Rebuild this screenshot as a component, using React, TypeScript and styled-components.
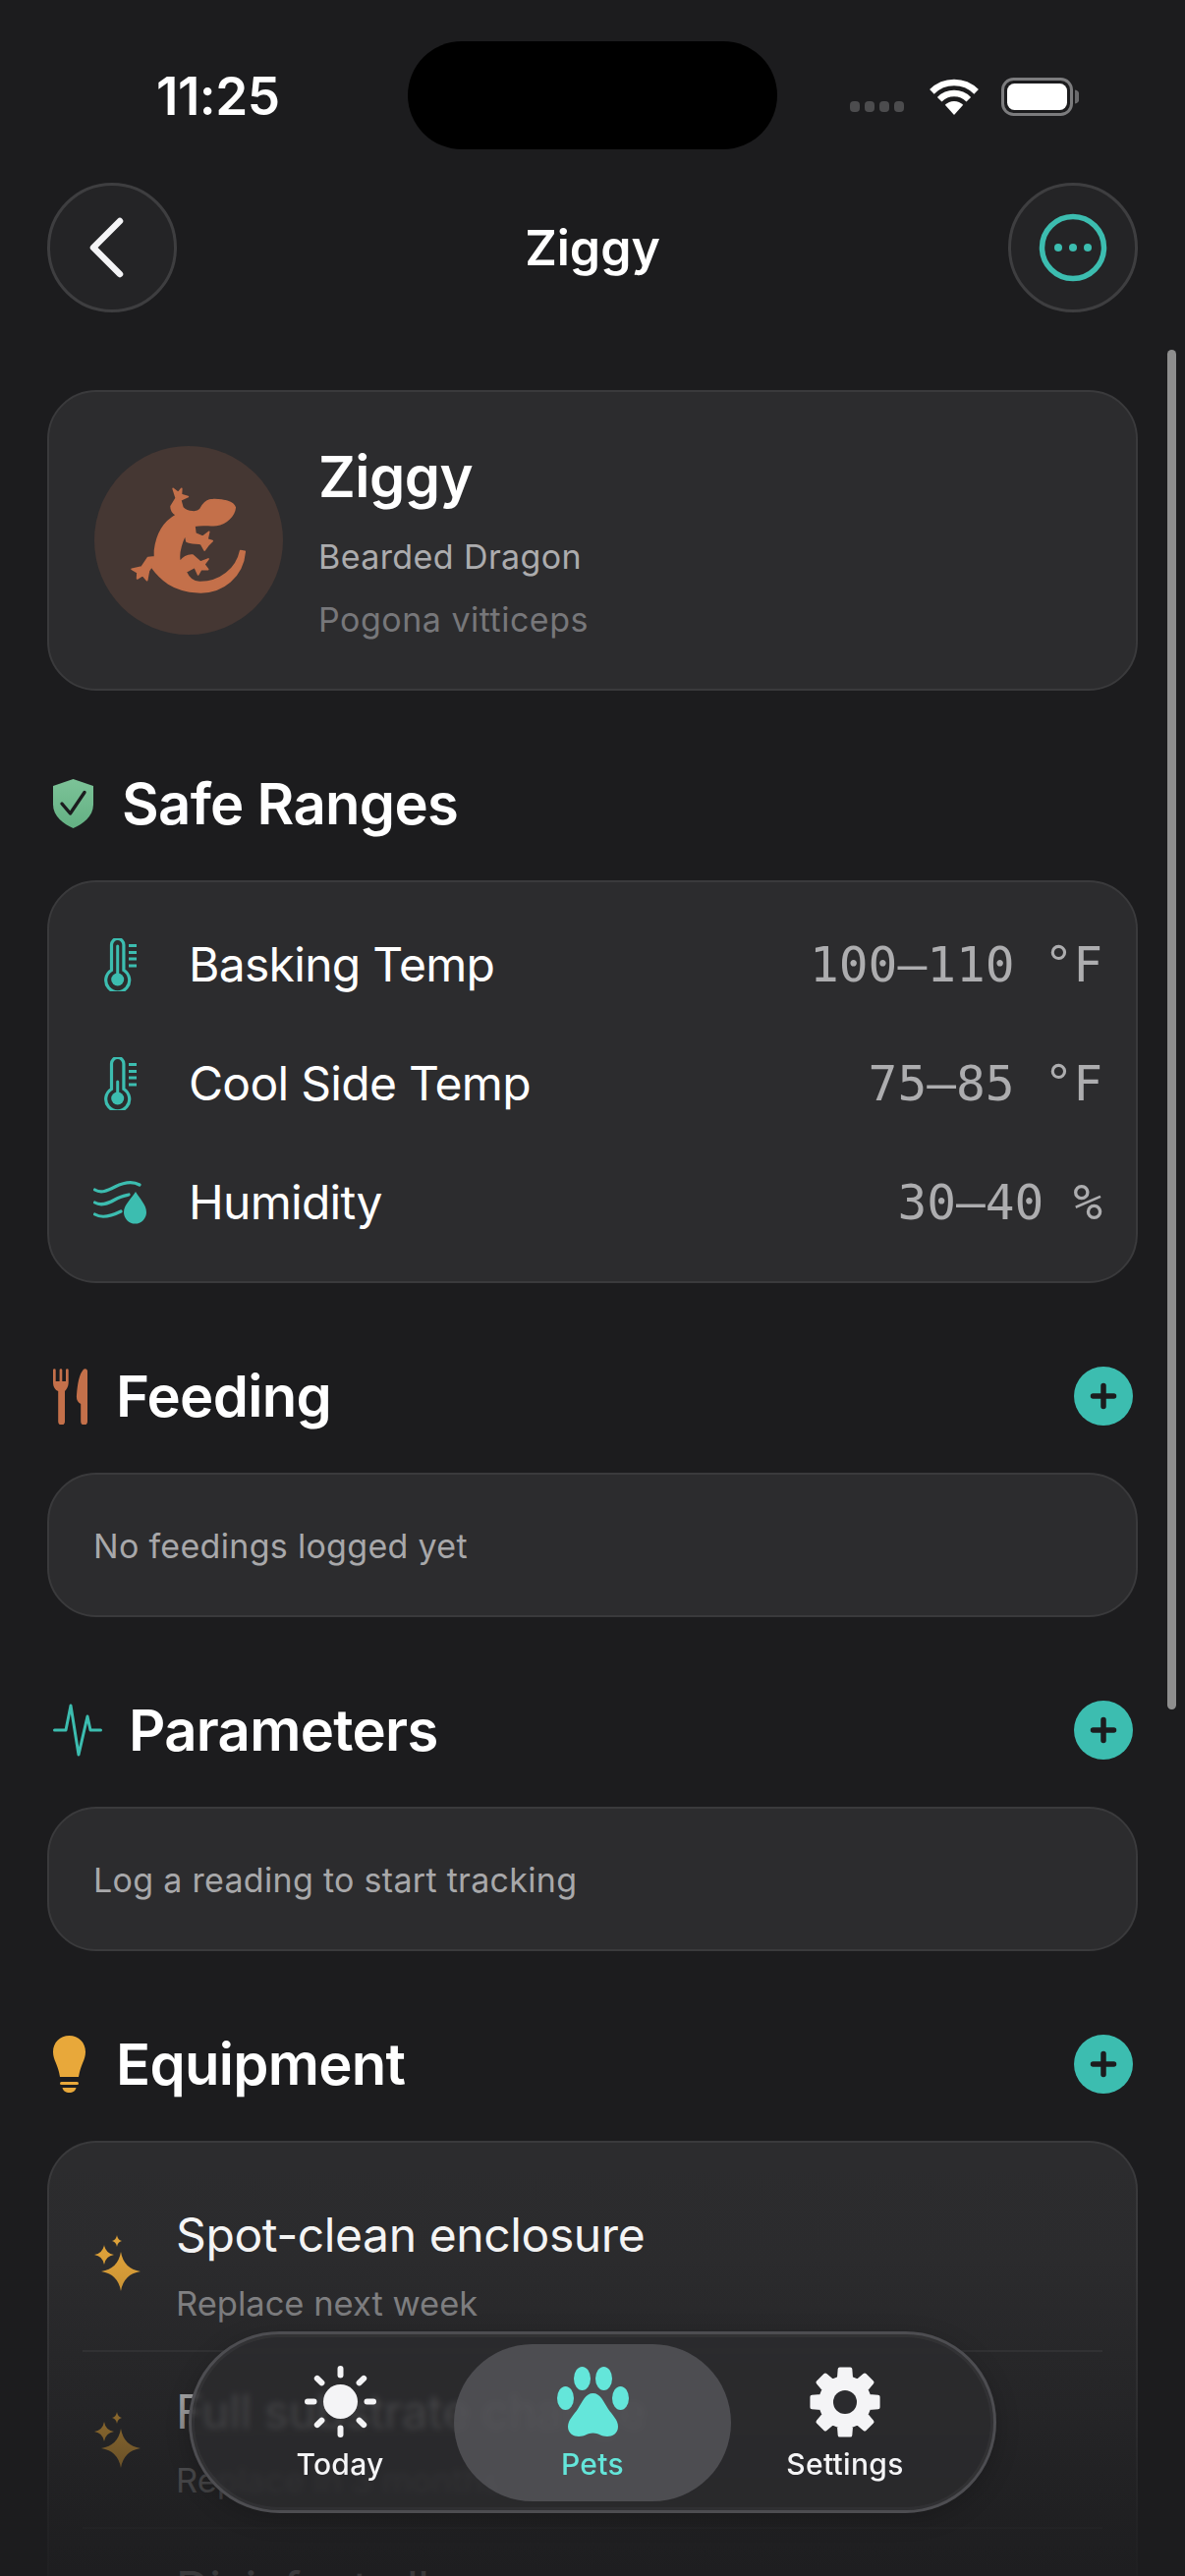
import React from 'react'
import styled, { createGlobalStyle } from 'styled-components'

const TEAL = '#3cbdb0'
const RUST = '#c4704a'
const AMBER = '#e8a83a'

const GlobalStyle = createGlobalStyle`
  html, body {
    margin: 0;
    padding: 0;
    background: #1c1c1e;
  }
  * {
    box-sizing: border-box;
  }
`

const Page = styled.div`
  position: relative;
  width: 1206px;
  height: 2622px;
  overflow: hidden;
  background: #1c1c1e;
  color: #fff;
  font-family: Inter, 'Noto Sans', sans-serif;
`

const StatusBar = styled.div`
  display: grid;
  grid-template-columns: 415px 376px 1fr;
  align-items: center;
  height: 186px;
  padding-top: 42px;
  padding-bottom: 34px;
`

const Clock = styled.div`
  padding-left: 159px;
  padding-top: 2px;
  font-size: 53px;
  font-weight: 600;
  letter-spacing: -0.5px;
  line-height: 60px;
`

const Island = styled.div`
  height: 110px;
  border-radius: 55px;
  background: #000;
`

const StatusIcons = styled.div`
  display: flex;
  align-items: center;
  padding-top: 2px;
  padding-left: 74px;
  gap: 23px;
`

const SignalDots = styled.div`
  display: flex;
  gap: 5px;
  margin-top: 20px;
  margin-right: 3px;
`

const SignalDot = styled.span`
  width: 10px;
  height: 11px;
  border-radius: 4px;
  background: #4c4c4e;
`

const Header = styled.header`
  display: grid;
  grid-template-columns: 132px 1fr 132px;
  align-items: center;
  padding: 0 48px;
`

const RoundButton = styled.button`
  display: flex;
  align-items: center;
  justify-content: center;
  width: 132px;
  height: 132px;
  padding: 0;
  border: 3px solid #3e3e40;
  border-radius: 50%;
  background: #242426;
`

const HeaderTitle = styled.h1`
  margin: 0;
  text-align: center;
  font-size: 50px;
  font-weight: 600;
  line-height: 64px;
`

const Content = styled.main`
  padding: 79px 48px 0;
`

const Card = styled.section`
  border: 2px solid #3a3a3c;
  border-radius: 50px;
  background: #2c2c2e;
`

const ProfileCard = styled(Card)`
  display: flex;
  align-items: center;
  gap: 36px;
  height: 306px;
  padding-left: 46px;
`

const Avatar = styled.div`
  display: flex;
  align-items: center;
  justify-content: center;
  width: 192px;
  height: 192px;
  border-radius: 50%;
  background: #453733;
`

const ProfileText = styled.div`
  display: flex;
  flex-direction: column;
  margin-top: 6px;
`

const PetName = styled.div`
  font-size: 58px;
  font-weight: 600;
  line-height: 70px;
  letter-spacing: -0.5px;
  margin-top: -3px;
`

const Breed = styled.div`
  margin-top: 25px;
  font-size: 34px;
  line-height: 44px;
  letter-spacing: 0.4px;
  color: #acacae;
`

const Species = styled.div`
  margin-top: 20px;
  font-size: 34px;
  line-height: 44px;
  letter-spacing: 0.5px;
  color: #77777a;
`

const SectionHead = styled.div<{ $gap?: number }>`
  display: flex;
  align-items: center;
  gap: ${p => p.$gap ?? 29}px;
  height: 66px;
  margin: 82px 5px 45px 6px;
`

const SectionTitle = styled.h2`
  flex: 1;
  margin: 0;
  font-size: 58px;
  font-weight: 600;
  line-height: 66px;
  letter-spacing: -0.7px;
`

const AddButton = styled.button`
  display: flex;
  align-items: center;
  justify-content: center;
  width: 60px;
  height: 60px;
  padding: 0;
  border: 0;
  border-radius: 50%;
  background: ${TEAL};
`

const RangeCard = styled(Card)`
  padding: 23px 34px 20px;
`

const RangeRow = styled.div`
  display: flex;
  align-items: center;
  height: 121px;
`

const RangeIcon = styled.div`
  display: flex;
  justify-content: center;
  width: 76px;
  margin-right: 32px;
`

const RangeLabel = styled.div`
  flex: 1;
  font-size: 48px;
  line-height: 58px;
  letter-spacing: -0.7px;
  color: #fff;
`

const RangeValue = styled.div`
  font-family: 'DejaVu Sans Mono', 'Liberation Mono', monospace;
  font-size: 49.5px;
  line-height: 58px;
  color: #adadaf;
  white-space: pre;
`

const EmptyCard = styled(Card)`
  display: flex;
  align-items: center;
  height: 147px;
  padding-left: 45px;
  padding-top: 2px;
  font-size: 34px;
  letter-spacing: 0.3px;
  color: #a8a8aa;
`

const ListCard = styled(Card)`
  padding: 33px 34px 0;
  border-bottom: 0;
`

const ListRow = styled.div`
  display: flex;
  align-items: center;
  gap: 35px;
  height: 180px;
  padding-left: 12px;
  border-bottom: 2px solid #3a3a3c;
`

const ListText = styled.div`
  display: flex;
  flex-direction: column;
  margin-top: 6px;
`

const ListTitle = styled.div`
  font-size: 48px;
  line-height: 58px;
  letter-spacing: -0.4px;
  color: #fff;
`

const ListSub = styled.div`
  margin-top: 19px;
  font-size: 34.5px;
  line-height: 44px;
  color: #939395;
`

const BottomFade = styled.div`
  position: absolute;
  left: 0;
  right: 0;
  top: 2190px;
  bottom: 0;
  background: linear-gradient(
    to bottom,
    rgba(28, 28, 30, 0) 0%,
    rgba(28, 28, 30, 0.06) 25%,
    rgba(28, 28, 30, 0.5) 65%,
    rgba(28, 28, 30, 0.75) 85%,
    rgba(28, 28, 30, 0.88) 100%
  );
`

const ScrollThumb = styled.div`
  position: absolute;
  left: 1188px;
  top: 356px;
  width: 9px;
  height: 1384px;
  border-radius: 5px;
  background: #8e8e8e;
`

const TabBar = styled.nav`
  position: absolute;
  left: 192px;
  top: 2373px;
  display: flex;
  justify-content: center;
  width: 822px;
  height: 185px;
  padding-top: 10px;
  border: 3px solid #4d4d51;
  border-radius: 93px;
  background: rgba(43, 43, 46, 0.78);
  backdrop-filter: blur(3px);
  box-shadow: inset 0 0 0 3px rgba(255, 255, 255, 0.04), 0 6px 24px rgba(0, 0, 0, 0.2);
`

const TabItem = styled.div<{ $active?: boolean }>`
  display: flex;
  flex-direction: column;
  align-items: center;
  width: ${p => (p.$active ? '282px' : '232px')};
  height: 160px;
  padding-top: 21px;
  border-radius: 80px;
  background: ${p => (p.$active ? 'rgba(86, 86, 90, 0.82)' : 'transparent')};
  color: ${p => (p.$active ? '#64e6da' : '#f4f4f6')};
`

const TabIcon = styled.div`
  display: flex;
  align-items: center;
  justify-content: center;
  height: 75px;
`

const TabLabel = styled.div`
  margin-top: 8px;
  font-size: 30px;
  font-weight: 500;
  line-height: 36px;
  letter-spacing: 0.3px;
`

const Wifi = () => (
  <svg width="50" height="37" viewBox="0 0 50 37" fill="none" stroke="#fff" strokeWidth="6.5">
    <path d="M2.4 13.4A32 32 0 0 1 47.6 13.4" />
    <path d="M10.2 21.2A21 21 0 0 1 39.8 21.2" />
    <path d="M25 37L15.8 26.8A13 13 0 0 1 34.2 26.8Z" fill="#fff" stroke="none" />
  </svg>
)

const Battery = () => (
  <svg width="79" height="39" viewBox="0 0 79 39">
    <rect x="1.5" y="1.5" width="70" height="36" rx="11" fill="none" stroke="#7c7c7e" strokeWidth="3" />
    <rect x="6" y="6" width="61" height="27" rx="7.5" fill="#fff" />
    <path d="M75 12.5a5 7 0 0 1 0 14z" fill="#6a6a6c" />
  </svg>
)

const BackIcon = () => (
  <svg width="40" height="62" viewBox="0 0 40 62" fill="none" stroke="#f4f4f6" strokeWidth="6.5" strokeLinecap="round" strokeLinejoin="round" style={{ marginLeft: -10 }}>
    <path d="M33 4L6 31L33 58" />
  </svg>
)

const MoreIcon = () => (
  <svg width="70" height="70" viewBox="0 0 70 70">
    <circle cx="35" cy="35" r="31.5" fill="none" stroke={TEAL} strokeWidth="5.5" />
    <circle cx="20" cy="35" r="4" fill={TEAL} />
    <circle cx="35" cy="35" r="4" fill={TEAL} />
    <circle cx="50" cy="35" r="4" fill={TEAL} />
  </svg>
)

const Gecko = () => (
  <svg width="124" height="114" viewBox="188 200 360 330">
    <path
      fill={RUST}
      stroke={RUST}
      strokeWidth="5"
      strokeLinejoin="round"
      d="M505 268C500 252 470 244 440 245C422 245 410 257 402 274C394 284 366 284 350 268L344 246L366 236L346 230L347 212L337 224L322 212L331 240L316 265C316 278 322 285 332 290C295 310 274 345 268 395L268 414L248 416L229 444L200 450L217 460L216 478L232 468L245 483L250 455L258 443C285 480 320 514 395 518C470 522 528 470 534 398L521 396C510 450 460 490 400 489C385 488 368 478 360 458L386 444L396 466L405 450L425 451L414 436L426 420L403 429L380 409C365 407 350 417 342 429C336 405 345 375 358 347L362 368C375 375 395 372 405 376L415 394L425 380L438 367L423 362L428 340L410 354L388 345L385 322C410 316 430 322 450 320C480 316 503 290 505 268Z"
    />
  </svg>
)

const ShieldIcon = () => (
  <svg width="41" height="50" viewBox="0 0 41 50">
    <defs>
      <linearGradient id="shieldFill" x1="0" y1="0" x2="0" y2="1">
        <stop offset="0" stopColor="#7cc398" />
        <stop offset="1" stopColor="#63b083" />
      </linearGradient>
    </defs>
    <path d="M20.5 0L41 7V26C41 38 30 46 20.5 50C11 46 0 38 0 26V7Z" fill="url(#shieldFill)" />
    <path d="M9 25L17.5 35L32 13.5" fill="none" stroke="#1c1c1e" strokeWidth="3.4" strokeLinecap="round" strokeLinejoin="round" />
  </svg>
)

const Thermometer = ({ stemTop }: { stemTop: number }) => (
  <svg width="33" height="54" viewBox="0 0 33 54">
    <path d="M7.5 32.5V6.7a6.2 6.2 0 0 1 12.4 0V32.5a12 12 0 1 1 -12.4 0Z" fill="none" stroke={TEAL} strokeWidth="3.2" />
    <circle cx="13.7" cy="42" r="6.5" fill={TEAL} />
    <path d={`M13.7 ${stemTop}V40`} stroke={TEAL} strokeWidth="3" strokeLinecap="round" />
    <path d="M25 7.5H33M25 14.5H33M25 21H33M25 28H33" stroke={TEAL} strokeWidth="2.8" />
  </svg>
)

const HumidityIcon = () => (
  <svg width="54" height="44" viewBox="0 0 54 44" fill="none" stroke={TEAL} strokeWidth="3.2" strokeLinecap="round">
    <path d="M1.5 9C8 13 14 10 22 6C30 2 40 0 47 4" />
    <path d="M1.5 22C8 26 15 23 22 19C27 16 32 15 36 14" />
    <path d="M1.5 34C8 38 16 37 28 31" />
    <path d="M43 11C47 18 54 24 54 32a11.5 11.5 0 0 1 -23 0C31 24 39 18 43 11Z" fill={TEAL} stroke="none" />
  </svg>
)

const ForkKnifeIcon = () => (
  <svg width="35" height="57" viewBox="0 0 35 57" fill={RUST}>
    <path d="M0 1.5a1.3 1.3 0 0 1 2.7 0V13H6.6V1.5a1.3 1.3 0 0 1 2.7 0V13H13V1.5a1.3 1.3 0 0 1 2.7 0V14C15.7 19 13 22 12 23V54a3.4 3.4 0 0 1 -6.8 0V23C2.5 22 0 19 0 14Z" />
    <path d="M31 .8C33 -.6 35 .5 35 2.5V54a3.4 3.4 0 0 1 -6.8 0V36C25 34 23.5 32 24 27C25 15 26.5 6 31 .8Z" />
  </svg>
)

const PulseIcon = () => (
  <svg width="50" height="54" viewBox="0 0 50 54" fill="none" stroke={TEAL} strokeWidth="3" strokeLinecap="round" strokeLinejoin="round">
    <path d="M1.5 27H13L18 2L26 52L35 13L38 27H48.5" />
  </svg>
)

const BulbIcon = () => (
  <svg width="33" height="58" viewBox="0 0 33 58" fill={AMBER}>
    <path d="M16.5 0C26 0 33 7 33 16.5C33 25 28 29 26 42H7C5 29 0 25 0 16.5C0 7 7 0 16.5 0Z" />
    <rect x="7" y="47" width="19" height="3" rx="1.5" />
    <path d="M9.5 53H23.5C23 56 20 58 16.5 58C13 58 10 56 9.5 53Z" />
  </svg>
)

const star = (cx: number, cy: number, rx: number, ry: number) => {
  const kx = rx * 0.14
  const ky = ry * 0.14
  return `M${cx} ${cy - ry}Q${cx + kx} ${cy - ky} ${cx + rx} ${cy}Q${cx + kx} ${cy + ky} ${cx} ${cy + ry}Q${cx - kx} ${cy + ky} ${cx - rx} ${cy}Q${cx - kx} ${cy - ky} ${cx} ${cy - ry}Z`
}

const SparkleIcon = () => (
  <svg width="48" height="57" viewBox="0 0 48 57" fill={AMBER}>
    <path d={star(23, 6, 5, 6)} />
    <path d={star(10, 20, 10, 10)} />
    <path d={star(27, 37, 20, 20)} />
  </svg>
)

const PlusIcon = () => (
  <svg width="30" height="30" viewBox="0 0 30 30" fill="none" stroke="#1c1c1e" strokeWidth="5.5" strokeLinecap="round">
    <path d="M15 4.5V25.5M4.5 15H25.5" />
  </svg>
)

const SunIcon = () => {
  const rays = [0, 45, 90, 135, 180, 225, 270, 315]
  return (
    <svg width="75" height="75" viewBox="0 0 75 75" fill="currentColor">
      <circle cx="37.5" cy="37.5" r="17.5" />
      {rays.map(a => (
        <rect key={a} x="34.5" y="1" width="6" height="12.5" rx="3" transform={`rotate(${a} 37.5 37.5)`} />
      ))}
    </svg>
  )
}

const PawIcon = () => (
  <svg width="73" height="71" viewBox="0 0 73 71" fill="currentColor">
    <ellipse cx="8.5" cy="32" rx="8.5" ry="12" />
    <ellipse cx="25.5" cy="12" rx="8.5" ry="12" />
    <ellipse cx="47.5" cy="12" rx="8.5" ry="12" />
    <ellipse cx="64.5" cy="32" rx="8.5" ry="12" />
    <path d="M36.5 27C44 27 47 35 52 43C56 49 62 54 62 61C62 68 56 71 51 71C45 71 42 67.5 36.5 67.5C31 67.5 28 71 22 71C17 71 11 68 11 61C11 54 17 49 21 43C26 35 29 27 36.5 27Z" />
  </svg>
)

const gearPath = () => {
  const pts: string[] = []
  const at = (r: number, deg: number) => {
    const t = ((deg - 90) * Math.PI) / 180
    return `${(36 + r * Math.cos(t)).toFixed(2)} ${(36 + r * Math.sin(t)).toFixed(2)}`
  }
  for (let i = 0; i < 8; i++) {
    const a = i * 45
    pts.push(at(25, a - 14), at(34, a - 9), at(34, a + 9), at(25, a + 14))
  }
  return `M${pts.join('L')}Z`
}

const GearIcon = () => (
  <svg width="72" height="72" viewBox="0 0 72 72">
    <path d={gearPath()} fill="currentColor" stroke="currentColor" strokeWidth="4" strokeLinejoin="round" />
    <circle cx="36" cy="36" r="12" fill="#2b2b2e" />
  </svg>
)

const ranges = [
  { label: 'Basking Temp', value: '100–110 °F', icon: <Thermometer stemTop={8} /> },
  { label: 'Cool Side Temp', value: '75–85 °F', icon: <Thermometer stemTop={25} /> },
  { label: 'Humidity', value: '30–40 %', icon: <HumidityIcon /> },
]

const chores = [
  { title: 'Spot-clean enclosure', sub: 'Replace next week' },
  { title: 'Full substrate change', sub: 'Replace in 3 months' },
  { title: 'Disinfect all', sub: 'Replace monthly' },
]

const App = () => (
  <Page>
    <GlobalStyle />
    <StatusBar>
      <Clock>11:25</Clock>
      <Island />
      <StatusIcons>
        <SignalDots>
          <SignalDot />
          <SignalDot />
          <SignalDot />
          <SignalDot />
        </SignalDots>
        <Wifi />
        <Battery />
      </StatusIcons>
    </StatusBar>

    <Header>
      <RoundButton>
        <BackIcon />
      </RoundButton>
      <HeaderTitle>Ziggy</HeaderTitle>
      <RoundButton>
        <MoreIcon />
      </RoundButton>
    </Header>

    <Content>
      <ProfileCard>
        <Avatar>
          <Gecko />
        </Avatar>
        <ProfileText>
          <PetName>Ziggy</PetName>
          <Breed>Bearded Dragon</Breed>
          <Species>Pogona vitticeps</Species>
        </ProfileText>
      </ProfileCard>

      <SectionHead>
        <ShieldIcon />
        <SectionTitle>Safe Ranges</SectionTitle>
      </SectionHead>
      <RangeCard>
        {ranges.map(r => (
          <RangeRow key={r.label}>
            <RangeIcon>{r.icon}</RangeIcon>
            <RangeLabel>{r.label}</RangeLabel>
            <RangeValue>{r.value}</RangeValue>
          </RangeRow>
        ))}
      </RangeCard>

      <SectionHead>
        <ForkKnifeIcon />
        <SectionTitle>Feeding</SectionTitle>
        <AddButton>
          <PlusIcon />
        </AddButton>
      </SectionHead>
      <EmptyCard>No feedings logged yet</EmptyCard>

      <SectionHead $gap={27}>
        <PulseIcon />
        <SectionTitle>Parameters</SectionTitle>
        <AddButton>
          <PlusIcon />
        </AddButton>
      </SectionHead>
      <EmptyCard>Log a reading to start tracking</EmptyCard>

      <SectionHead $gap={31}>
        <BulbIcon />
        <SectionTitle>Equipment</SectionTitle>
        <AddButton>
          <PlusIcon />
        </AddButton>
      </SectionHead>
      <ListCard>
        {chores.map(c => (
          <ListRow key={c.title}>
            <SparkleIcon />
            <ListText>
              <ListTitle>{c.title}</ListTitle>
              <ListSub>{c.sub}</ListSub>
            </ListText>
          </ListRow>
        ))}
      </ListCard>
    </Content>

    <BottomFade />
    <ScrollThumb />

    <TabBar>
      <TabItem>
        <TabIcon>
          <SunIcon />
        </TabIcon>
        <TabLabel>Today</TabLabel>
      </TabItem>
      <TabItem $active>
        <TabIcon>
          <PawIcon />
        </TabIcon>
        <TabLabel>Pets</TabLabel>
      </TabItem>
      <TabItem>
        <TabIcon>
          <GearIcon />
        </TabIcon>
        <TabLabel>Settings</TabLabel>
      </TabItem>
    </TabBar>
  </Page>
)

export default App
